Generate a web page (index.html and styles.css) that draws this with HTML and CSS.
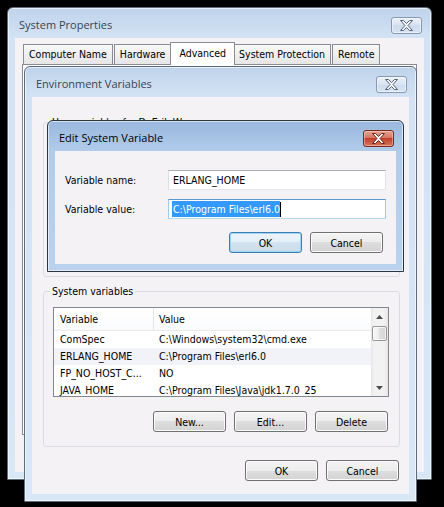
FILE: index.html
```html
<!DOCTYPE html>
<html lang="en">
<head>
    <meta charset="UTF-8">
    <meta name="viewport" content="width=device-width, initial-scale=1.0">
    <title>System Properties</title>
    <link rel="stylesheet" href="styles.css">
</head>
<body>
    <div class="desktop">

        <!-- System Properties, behind everything -->
        <div class="window sys-props">
            <div class="titlebar">
                <span class="title">System Properties</span>
                <span class="close-btn">
                    <svg width="13" height="11" viewBox="0 0 13 11"><path d="M0.5 0.5h3l3 3 3-3h3l-4.5 5 4.5 5h-3l-3-3-3 3h-3l4.5-5z"/></svg>
                </span>
            </div>
            <div class="client">
                <div class="tabs">
                    <span class="tab">Computer Name</span>
                    <span class="tab">Hardware</span>
                    <span class="tab selected">Advanced</span>
                    <span class="tab">System Protection</span>
                    <span class="tab">Remote</span>
                </div>
                <div class="tab-panel"></div>
            </div>
        </div>

        <!-- Environment Variables -->
        <div class="window env-vars">
            <div class="titlebar">
                <span class="title">Environment Variables</span>
                <span class="close-btn">
                    <svg width="13" height="11" viewBox="0 0 13 11"><path d="M0.5 0.5h3l3 3 3-3h3l-4.5 5 4.5 5h-3l-3-3-3 3h-3l4.5-5z"/></svg>
                </span>
            </div>
            <div class="client env-client">
                <!-- user section sits under the edit dialog -->
                <fieldset class="groupbox user-vars">
                    <legend>User variables for Dr.Erik.W</legend>
                    <div class="listview"></div>
                </fieldset>

                <fieldset class="groupbox">
                    <legend>System variables</legend>
                    <div class="listview">
                        <div class="lv-body">
                            <div class="lv-header">
                                <span class="col-name">Variable</span>
                                <span class="col-value">Value</span>
                            </div>
                            <div class="lv-row">
                                <span class="col-name">ComSpec</span>
                                <span class="col-value">C:\Windows\system32\cmd.exe</span>
                            </div>
                            <div class="lv-row hot">
                                <span class="col-name">ERLANG_HOME</span>
                                <span class="col-value">C:\Program Files\erl6.0</span>
                            </div>
                            <div class="lv-row">
                                <span class="col-name">FP_NO_HOST_C...</span>
                                <span class="col-value">NO</span>
                            </div>
                            <div class="lv-row">
                                <span class="col-name">JAVA_HOME</span>
                                <span class="col-value">C:\Program Files\Java\jdk1.7.0_25</span>
                            </div>
                        </div>
                        <div class="scrollbar">
                            <span class="sb-btn">
                                <svg width="7" height="4" viewBox="0 0 7 4"><path d="M3.5 0L7 4H0z"/></svg>
                            </span>
                            <div class="sb-track"><div class="sb-thumb"></div></div>
                            <span class="sb-btn">
                                <svg width="7" height="4" viewBox="0 0 7 4"><path d="M0 0h7L3.5 4z"/></svg>
                            </span>
                        </div>
                    </div>
                    <div class="button-row">
                        <button class="btn">New...</button>
                        <button class="btn">Edit...</button>
                        <button class="btn">Delete</button>
                    </div>
                </fieldset>

                <div class="dialog-buttons">
                    <button class="btn">OK</button>
                    <button class="btn">Cancel</button>
                </div>
            </div>
        </div>

        <!-- Edit System Variable, the active window -->
        <div class="window edit-var active">
            <div class="titlebar">
                <span class="title">Edit System Variable</span>
                <span class="close-btn">
                    <svg width="13" height="11" viewBox="0 0 13 11"><path d="M0.5 0.5h3l3 3 3-3h3l-4.5 5 4.5 5h-3l-3-3-3 3h-3l4.5-5z"/></svg>
                </span>
            </div>
            <div class="client edit-client">
                <div class="form-grid">
                    <label>Variable name:</label>
                    <div class="textbox">ERLANG_HOME</div>
                    <label>Variable value:</label>
                    <div class="textbox focused"><span class="selected-text">C:\Program Files\erl6.0</span><span class="caret"></span></div>
                </div>
                <div class="dialog-buttons">
                    <button class="btn default">OK</button>
                    <button class="btn">Cancel</button>
                </div>
            </div>
        </div>

    </div>
</body>
</html>
```

FILE: styles.css
```css
* {
    box-sizing: border-box;
}

body {
    margin: 0;
    background-color: #000;
    font-family: "DejaVu Sans Condensed", "DejaVu Sans", sans-serif;
    font-size: 10.5px;
    color: #000;
}

.desktop {
    position: relative;
    width: 444px;
    height: 507px;
    overflow: hidden;
}

/* window frames (basic theme) */
.window {
    position: absolute;
    display: flex;
    flex-direction: column;
    padding: 0 7px 7px;
    border: 1px solid #5d6a7a;
    border-radius: 6px 6px 0 0;
    background: linear-gradient(#bfd3eb, #d3e3f4 30px, #d8e7f6);
    box-shadow: inset 0 0 0 1px rgba(255, 255, 255, 0.6);
}

.window.active {
    border-color: #2b3542;
    background: linear-gradient(#99b8dd, #b1cbea 30px, #bad2ed);
}

.sys-props {
    left: 7px;
    top: 7px;
    width: 425px;
    height: 473px;
}

.env-vars {
    left: 24px;
    top: 66px;
    width: 393px;
    height: 436px;
}

.edit-var {
    left: 47px;
    top: 120px;
    width: 357px;
    height: 152px;
}

.titlebar {
    display: flex;
    align-items: flex-start;
    height: 30px;
    flex-shrink: 0;
    padding-left: 4px;
}

.title {
    margin-top: 9px;
    line-height: 16px;
    font-family: "Open Sans", "Noto Sans", sans-serif;
    font-size: 11px;
    color: #3b4350;
}

.active .title {
    color: #000;
}

.close-btn {
    display: flex;
    align-items: center;
    justify-content: center;
    width: 31px;
    height: 17px;
    margin: 9px 2px 0 auto;
    border: 1px solid #8798b4;
    border-radius: 3px;
    background: linear-gradient(#e9f0f8, #d9e4f2 50%, #cddbee 50%, #d8e4f3);
    box-shadow: inset 0 0 0 1px rgba(255, 255, 255, 0.5);
}

.close-btn svg path {
    fill: #f4f6f9;
    stroke: #56627a;
    stroke-width: 1;
}

.active .close-btn {
    border-color: #7b2a20;
    background: linear-gradient(#e7a596, #d4705c 50%, #c2402a 50%, #d2765e);
    box-shadow: inset 0 0 0 1px rgba(255, 220, 210, 0.45);
}

.active .close-btn svg path {
    fill: #fff;
    stroke: #6a2318;
}

.client {
    flex: 1;
    background-color: #f5f2f6;
}

/* tab control */
.tabs {
    display: flex;
    align-items: flex-end;
    height: 26px;
    padding-left: 8px;
}

.tab {
    height: 20px;
    line-height: 19px;
    padding: 0 5px;
    margin-right: 1px;
    border: 1px solid #898c95;
    border-bottom: none;
    background: linear-gradient(#f8f8f8, #e6e6e6);
    white-space: nowrap;
}

.tab.selected {
    position: relative;
    z-index: 1;
    height: 23px;
    line-height: 20px;
    margin: 0 -2px -1px -2px;
    padding: 0 8px;
    background: #fff;
}

.tab-panel {
    height: 371px;
    margin: 0 7px;
    border: 1px solid #898c95;
    background: #fff;
}

/* environment variables dialog */
.env-client {
    display: flex;
    flex-direction: column;
    padding-top: 19px;
}

.groupbox {
    margin: 0 9px 0 11px;
    padding: 0 10px 14px 9px;
    min-width: 0;
    border: 1px solid #d9dde3;
    border-radius: 3px;
}

.groupbox + .groupbox {
    margin-top: 8px;
}

.groupbox legend {
    padding: 0 2px;
    margin-left: -3px;
    line-height: 13px;
}

.listview {
    display: flex;
    height: 90px;
    margin-top: 9px;
    border: 1px solid #828790;
    background: #fff;
    overflow: hidden;
}

.user-vars {
    padding-bottom: 13px;
}

.user-vars .listview {
    height: 125px;
}

.lv-body {
    flex: 1;
    min-width: 0;
}

.lv-header {
    display: flex;
    height: 23px;
    line-height: 22px;
    border-bottom: 1px solid #eaeaea;
    background: linear-gradient(#fff, #fafbfc);
}

.lv-header .col-name {
    border-right: 1px solid #e3e5e8;
}

.lv-row {
    display: flex;
    height: 17px;
    line-height: 17px;
}

.lv-row.hot {
    background-color: #f2f2f9;
}

.col-name {
    flex-shrink: 0;
    width: 100px;
    padding-left: 6px;
    white-space: nowrap;
    overflow: hidden;
}

.col-value {
    padding-left: 5px;
    white-space: nowrap;
}

.scrollbar {
    display: flex;
    flex-direction: column;
    width: 17px;
    flex-shrink: 0;
    background: linear-gradient(90deg, #e6e6e6, #f2f2f2 3px, #f2f2f2 13px, #e6e6e6);
}

.sb-btn {
    display: flex;
    align-items: center;
    justify-content: center;
    height: 17px;
}

.sb-btn svg path {
    fill: #4d4d4d;
}

.sb-track {
    flex: 1;
    padding-top: 1px;
}

.sb-thumb {
    height: 15px;
    margin: 0 1px;
    border: 1px solid #969696;
    border-radius: 2px;
    background: linear-gradient(90deg, #f7f7f7, #ececec 50%, #dedede 50%, #d5d5d5);
    box-shadow: inset 0 0 0 1px rgba(255, 255, 255, 0.7);
}

.button-row,
.dialog-buttons {
    display: flex;
    justify-content: flex-end;
    gap: 8px;
}

.button-row {
    margin-top: 14px;
    padding-right: 1px;
}

.env-client .dialog-buttons {
    margin-top: 13px;
    padding-right: 10px;
}

.btn {
    width: 73px;
    height: 21px;
    padding: 0;
    font: inherit;
    color: #000;
    border: 1px solid #707070;
    border-radius: 3px;
    background: linear-gradient(#f4f4f4, #ececec 50%, #dedede 50%, #d3d3d3);
    box-shadow: inset 0 0 0 1px #fbfbfb;
}

.btn.default {
    border-color: #3c7fb1;
    background: linear-gradient(#eef5fa, #e3eef6 50%, #d3e3ef 50%, #c9dbea);
    box-shadow: inset 0 0 0 1px #9fd3f2;
}

/* edit variable dialog */
.edit-client {
    padding: 19px 13px 0 10px;
}

.form-grid {
    display: grid;
    grid-template-columns: 103px 1fr;
    row-gap: 9px;
    align-items: center;
    margin-right: -3px;
}

.textbox {
    display: flex;
    align-items: center;
    height: 20px;
    padding-left: 4px;
    border: 1px solid;
    border-color: #abadb3 #e2e3ea #e3e9ef #dbdfe6;
    background: #fff;
    white-space: nowrap;
}

.textbox.focused {
    padding-left: 3px;
    border-color: #5b98cf #a4c9e3 #b7d9ed #a4c9e3;
}

.selected-text {
    height: 16px;
    line-height: 16px;
    padding-left: 1px;
    background-color: #3399ff;
    color: #fff;
}

.caret {
    width: 1px;
    height: 15px;
    background-color: #000;
}

.edit-client .dialog-buttons {
    margin-top: 13px;
}
```
